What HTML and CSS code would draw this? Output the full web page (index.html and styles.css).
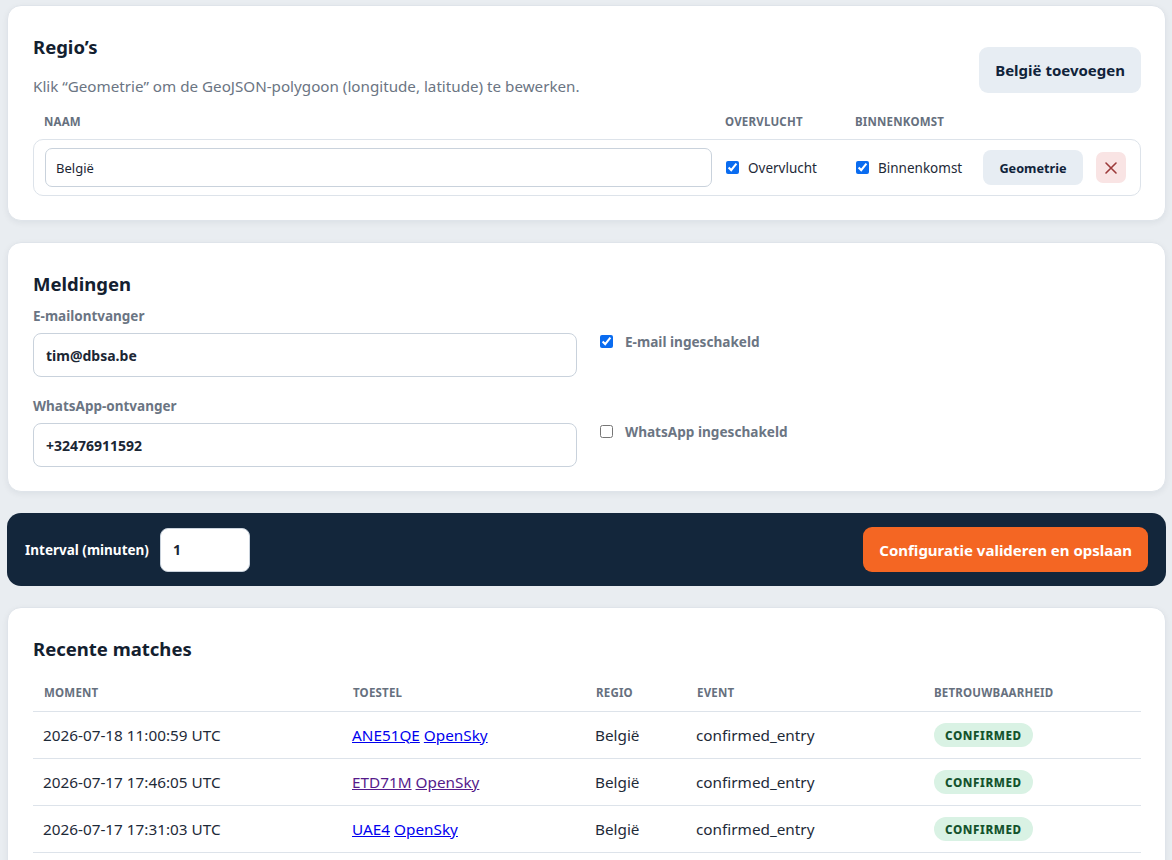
FILE: index.html
```html
<!DOCTYPE html>
<html lang="nl">
<head>
<meta charset="utf-8">
<title>Configuratie</title>
<link rel="stylesheet" href="styles.css">
</head>
<body>
<main class="page">
  <section class="card">
    <div class="card-head">
      <div>
        <h2 class="card-title">Regio’s</h2>
        <p class="hint">Klik “Geometrie” om de GeoJSON-polygoon (longitude, latitude) te bewerken.</p>
      </div>
      <button class="btn btn-soft btn-lg">België toevoegen</button>
    </div>
    <div class="region-grid region-headers">
      <span class="col-label">Naam</span>
      <span class="col-label">Overvlucht</span>
      <span class="col-label">Binnenkomst</span>
      <span></span>
      <span></span>
    </div>
    <div class="region-grid region-row">
      <input class="text-input name-input" type="text" value="België">
      <label class="check"><input type="checkbox" checked> Overvlucht</label>
      <label class="check"><input type="checkbox" checked> Binnenkomst</label>
      <button class="btn btn-soft btn-sm">Geometrie</button>
      <button class="btn btn-danger" aria-label="Verwijderen">
        <svg width="14" height="14" viewBox="0 0 14 14"><path d="M2 2L12 12M12 2L2 12" stroke="currentColor" stroke-width="1.6" stroke-linecap="round"/></svg>
      </button>
    </div>
  </section>

  <section class="card">
    <h2 class="card-title">Meldingen</h2>
    <div class="notify-grid">
      <div class="field">
        <label class="field-label">E-mailontvanger</label>
        <input class="text-input big-input" type="text" value="tim@dbsa.be">
      </div>
      <label class="toggle"><input type="checkbox" checked> E-mail ingeschakeld</label>
      <div class="field">
        <label class="field-label">WhatsApp-ontvanger</label>
        <input class="text-input big-input" type="text" value="+32476911592">
      </div>
      <label class="toggle"><input type="checkbox"> WhatsApp ingeschakeld</label>
    </div>
  </section>

  <section class="action-bar">
    <label class="interval">Interval (minuten) <input class="interval-input" type="text" value="1"></label>
    <button class="btn btn-primary">Configuratie valideren en opslaan</button>
  </section>

  <section class="card">
    <h2 class="card-title">Recente matches</h2>
    <table class="matches">
      <colgroup>
        <col class="c-moment"><col class="c-toestel"><col class="c-regio"><col class="c-event"><col>
      </colgroup>
      <thead>
        <tr><th>Moment</th><th>Toestel</th><th>Regio</th><th>Event</th><th>Betrouwbaarheid</th></tr>
      </thead>
      <tbody>
        <tr>
          <td>2026-07-18 11:00:59 UTC</td>
          <td><a href="#">ANE51QE</a> <a href="#">OpenSky</a></td>
          <td>België</td><td>confirmed_entry</td>
          <td><span class="badge">Confirmed</span></td>
        </tr>
        <tr>
          <td>2026-07-17 17:46:05 UTC</td>
          <td><a class="visited" href="#">ETD71M</a> <a class="visited" href="#">OpenSky</a></td>
          <td>België</td><td>confirmed_entry</td>
          <td><span class="badge">Confirmed</span></td>
        </tr>
        <tr>
          <td>2026-07-17 17:31:03 UTC</td>
          <td><a href="#">UAE4</a> <a href="#">OpenSky</a></td>
          <td>België</td><td>confirmed_entry</td>
          <td><span class="badge">Confirmed</span></td>
        </tr>
      </tbody>
    </table>
  </section>
</main>
</body>
</html>
```

FILE: styles.css
```css
* { box-sizing: border-box; }
html, body { margin: 0; }
body {
  background: #e9edf1;
  font-family: "Noto Sans", "Open Sans", sans-serif;
  color: #1e2a38;
  font-size: 14px;
}
.page {
  padding: 5px 6px 20px 7px;
  display: flex;
  flex-direction: column;
  gap: 21px;
}
.card {
  background: #fff;
  border: 1px solid #dfe4ea;
  border-radius: 14px;
  box-shadow: 0 2px 6px rgba(20, 35, 55, 0.06);
  padding: 27px 24px 24px 25px;
}
.card-title {
  margin: 0;
  font-size: 18.5px;
  line-height: 28px;
  font-weight: 700;
  color: #13202f;
}
.card-head {
  display: flex;
  justify-content: space-between;
  align-items: flex-end;
}
.hint {
  margin: 14px 0 0;
  font-size: 15.2px;
  line-height: 22px;
  color: #6b7583;
}
.btn {
  border: 0;
  font-family: inherit;
  font-weight: 700;
  color: #10233a;
  cursor: pointer;
}
.btn-soft { background: #e7edf3; }
.btn-lg {
  height: 46px;
  padding: 0 16px;
  border-radius: 9px;
  font-size: 15px;
  margin-bottom: 4px;
}
.btn-sm {
  height: 35px;
  border-radius: 8px;
  font-size: 12.7px;
}
.btn-danger {
  height: 31px;
  width: 30px;
  justify-self: end;
  border-radius: 7px;
  background: #f9e4e4;
  color: #9c3a3a;
  display: flex;
  align-items: center;
  justify-content: center;
  padding: 0;
}
.region-grid {
  display: grid;
  grid-template-columns: 1fr 118px 117px 100px 31px;
  gap: 12px;
  align-items: center;
}
.region-headers {
  padding: 0 14px 0 11px;
  margin-top: 12px;
  height: 24px;
}
.col-label {
  font-size: 11.5px;
  font-weight: 700;
  text-transform: uppercase;
  color: #66707e;
  letter-spacing: 0.2px;
}
.region-row {
  margin-top: 6px;
  border: 1px solid #dde3ea;
  border-radius: 10px;
  padding: 8px 14px 8px 11px;
}
.text-input {
  font-family: inherit;
  border: 1px solid #c9d2dc;
  background: #fff;
  color: #1b2634;
  outline: none;
}
.name-input {
  height: 39px;
  border-radius: 7px;
  padding: 0 10px;
  font-size: 13px;
  width: 100%;
}
.check {
  display: flex;
  align-items: center;
  gap: 9px;
  font-size: 13.5px;
  color: #1e2a38;
}
.check input, .toggle input {
  margin: 0 0 0 1px;
  width: 13px;
  height: 13px;
  accent-color: #0a6cf0;
}
.check input { margin-left: 2px; }
.notify-grid {
  margin-top: 9px;
  display: grid;
  grid-template-columns: 544px 1fr;
  column-gap: 22px;
  row-gap: 20px;
}
.field { display: flex; flex-direction: column; gap: 8px; }
.field-label {
  font-size: 13.5px;
  line-height: 18px;
  font-weight: 700;
  color: #6b7583;
}
.big-input {
  height: 44px;
  border-radius: 8px;
  padding: 0 12px;
  font-size: 14px;
  font-weight: 700;
  width: 100%;
}
.toggle {
  display: flex;
  align-items: center;
  gap: 12px;
  font-size: 13.6px;
  font-weight: 700;
  color: #6b7583;
  padding-top: 25px;
  align-self: start;
}
.action-bar {
  background: #13263b;
  border-radius: 14px;
  padding: 14px 18px;
  min-height: 73px;
  display: flex;
  align-items: center;
  justify-content: space-between;
}
.interval {
  display: flex;
  align-items: center;
  gap: 11px;
  color: #fff;
  font-size: 13.5px;
  font-weight: 700;
}
.interval-input {
  width: 90px;
  height: 44px;
  border: 1px solid #c9d2dc;
  border-radius: 8px;
  padding: 0 12px;
  font-family: inherit;
  font-size: 14px;
  font-weight: 700;
  color: #1b2634;
  outline: none;
}
.btn-primary {
  background: #f46623;
  color: #fff;
  height: 45px;
  padding: 0 16px;
  border-radius: 9px;
  font-size: 15px;
}
.matches {
  margin-top: 18px;
  width: 100%;
  border-collapse: collapse;
  table-layout: fixed;
}
.c-moment { width: 309px; }
.c-toestel { width: 243px; }
.c-regio { width: 101px; }
.c-event { width: 237px; }
.matches th {
  text-align: left;
  font-size: 11.5px;
  font-weight: 700;
  text-transform: uppercase;
  color: #66707e;
  padding: 0 11px 7px;
  height: 30px;
  border-bottom: 1px solid #dde3ea;
  letter-spacing: 0.2px;
}
.matches td {
  height: 47px;
  padding: 0 10px;
  font-size: 15.3px;
  border-bottom: 1px solid #dde3ea;
  color: #1e2a38;
}
.matches a { color: #0000ee; }
.matches a.visited { color: #551a8b; }
.badge {
  display: inline-block;
  background: #d9f2e4;
  color: #14532d;
  font-size: 11.7px;
  font-weight: 800;
  text-transform: uppercase;
  letter-spacing: 0.6px;
  padding: 0 11px;
  height: 24px;
  line-height: 24px;
  border-radius: 12px;
  margin-left: 1px;
}
```
